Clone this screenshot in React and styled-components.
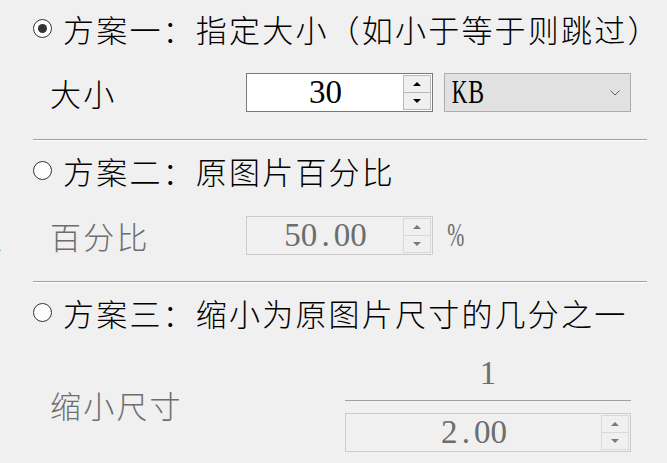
import React from 'react';
import styled, { createGlobalStyle } from 'styled-components';

const Global = createGlobalStyle`
  html, body { margin: 0; padding: 0; background: #f0f0f0; }
  body { font-family: "Noto Sans CJK SC", sans-serif; }
`;

const Page = styled.div`
  width: 667px;
  height: 463px;
  overflow: hidden;
  box-sizing: border-box;
  padding: 12px 20px 0 33px;
  background: #f0f0f0;
  display: flex;
  flex-direction: column;
`;

const RadioRow = styled.div`
  display: flex;
  align-items: center;
  height: 33px;
  gap: 11px;
  margin-top: ${(p) => p.$mt || 0}px;
`;

const RadioCircle = styled.span`
  width: 19px;
  height: 19px;
  flex: none;
  box-sizing: border-box;
  border-radius: 50%;
  border: 1px solid #333;
  background: #fff;
  display: flex;
  align-items: center;
  justify-content: center;
  &::after {
    content: '';
    width: 9px;
    height: 9px;
    border-radius: 50%;
    background: #333;
    display: ${(p) => (p.$checked ? 'block' : 'none')};
  }
`;

const Cjk = styled.span`
  font-family: "Noto Sans CJK SC", sans-serif;
  font-weight: 300;
  font-size: 31px;
  letter-spacing: 2.2px;
  line-height: 33px;
  white-space: nowrap;
  color: ${(p) => (p.$disabled ? '#6d6d6d' : '#000')};
`;

const FieldRow = styled.div`
  display: flex;
  align-items: center;
  padding-left: 17px;
  margin-top: ${(p) => p.$mt || 0}px;
`;

const FieldLabel = styled(Cjk)`
  flex: none;
  width: ${(p) => p.$w}px;
  margin-left: ${(p) => p.$ml || 0}px;
`;

const Ghost = styled(Cjk)`
  flex: none;
  width: 33px;
  margin-left: -79px;
  overflow: hidden;
`;

const SpinBox = styled.div`
  display: flex;
  box-sizing: border-box;
  width: ${(p) => p.$w}px;
  height: 39px;
  padding: 1px;
  border: 1px solid ${(p) => (p.$disabled ? '#cccccc' : '#7a7a7a')};
  background: ${(p) => (p.$disabled ? '#f0f0f0' : '#ffffff')};
`;

const SpinText = styled.div`
  flex: 1;
  display: flex;
  align-items: center;
  justify-content: center;
  font-family: "Liberation Serif", serif;
  font-size: 33px;
  line-height: 33px;
  color: ${(p) => (p.$disabled ? '#6d6d6d' : '#000')};
`;

const SpinButtons = styled.div`
  flex: none;
  width: 28px;
  display: flex;
  flex-direction: column;
`;

const SpinBtn = styled.div`
  flex: 1;
  display: flex;
  align-items: center;
  justify-content: center;
  border: 1px solid ${(p) => (p.$disabled ? '#d9d9d9' : '#b9b9b9')};
  background: #f0f0f0;
  & + & { margin-top: -1px; }
`;

const Arrow = styled.span`
  width: 0;
  height: 0;
  border-left: 4px solid transparent;
  border-right: 4px solid transparent;
  ${(p) =>
    p.$down
      ? `border-top: 4px solid ${p.$disabled ? '#7a7a7a' : '#000'};`
      : `border-bottom: 4px solid ${p.$disabled ? '#7a7a7a' : '#000'};`}
`;

const Ch = styled.span`
  display: inline-block;
  width: 0.5em;
  text-align: center;
  ${(p) => (p.$sq ? `transform: scaleX(${p.$sq});` : '')}
`;

const Combo = styled.div`
  flex: none;
  display: flex;
  align-items: center;
  justify-content: space-between;
  box-sizing: border-box;
  width: 187px;
  height: 39px;
  margin-left: 11px;
  padding: 0 10px 0 4px;
  border: 1px solid #adadad;
  background: #e1e1e1;
  font-family: "Liberation Serif", serif;
  font-size: 33px;
  line-height: 33px;
  color: #000;
`;

const Unit = styled.span`
  margin-left: 11px;
  font-family: "Liberation Serif", serif;
  font-size: 33px;
  line-height: 33px;
  color: #6d6d6d;
`;

const Separator = styled.div`
  flex: none;
  height: 1px;
  background: #a0a0a0;
  box-shadow: 0 1px 0 #ffffff;
  margin-top: ${(p) => p.$mt}px;
`;

const Fraction = styled.div`
  flex: none;
  width: 286px;
  display: flex;
  flex-direction: column;
  align-items: stretch;
`;

const Numerator = styled.div`
  text-align: center;
  font-family: "Liberation Serif", serif;
  font-size: 33px;
  line-height: 33px;
  color: #6d6d6d;
`;

const FractionBar = styled.div`
  height: 1px;
  background: #a0a0a0;
  margin: 9.5px 0 12px;
`;

const SQUEEZE = { K: 0.66, B: 0.72, '%': 0.62 };

function Half({ text }) {
  return (
    <>
      {text.split('').map((c, i) => (
        <Ch key={i} $sq={SQUEEZE[c]}>
          {c}
        </Ch>
      ))}
    </>
  );
}

function Radio({ checked, children }) {
  return (
    <>
      <RadioCircle $checked={checked} />
      <Cjk>{children}</Cjk>
    </>
  );
}

function Spin({ value, width, disabled }) {
  return (
    <SpinBox $w={width} $disabled={disabled}>
      <SpinText $disabled={disabled}>
        <Half text={value} />
      </SpinText>
      <SpinButtons>
        <SpinBtn $disabled={disabled}>
          <Arrow $disabled={disabled} />
        </SpinBtn>
        <SpinBtn $disabled={disabled}>
          <Arrow $down $disabled={disabled} />
        </SpinBtn>
      </SpinButtons>
    </SpinBox>
  );
}

export default function App() {
  return (
    <>
      <Global />
      <Page>
        <RadioRow>
          <Radio checked>方案一：指定大小（如小于等于则跳过）</Radio>
        </RadioRow>
        <FieldRow $mt={28}>
          <FieldLabel $w={196}>大小</FieldLabel>
          <Spin value="30" width={187} />
          <Combo>
            <span>
              <Half text="KB" />
            </span>
            <svg width="10" height="6" viewBox="0 0 10 6">
              <path d="M0.5 0.5 L5 5 L9.5 0.5" fill="none" stroke="#606060" strokeWidth="1" />
            </svg>
          </Combo>
        </FieldRow>
        <Separator $mt={27} />

        <RadioRow $mt={13.5}>
          <Radio>方案二：原图片百分比</Radio>
        </RadioRow>
        <FieldRow $mt={29}>
          <Ghost>置</Ghost>
          <FieldLabel $w={196} $ml={46} $disabled>
            百分比
          </FieldLabel>
          <Spin value="50.00" width={187} disabled />
          <Unit>
            <Half text="%" />
          </Unit>
        </FieldRow>
        <Separator $mt={26} />

        <RadioRow $mt={14.5}>
          <Radio>方案三：缩小为原图片尺寸的几分之一</Radio>
        </RadioRow>
        <FieldRow $mt={28}>
          <FieldLabel $w={295} $disabled>
            缩小尺寸
          </FieldLabel>
          <Fraction>
            <Numerator>
              <Half text="1" />
            </Numerator>
            <FractionBar />
            <Spin value="2.00" width={286} disabled />
          </Fraction>
        </FieldRow>
      </Page>
    </>
  );
}
